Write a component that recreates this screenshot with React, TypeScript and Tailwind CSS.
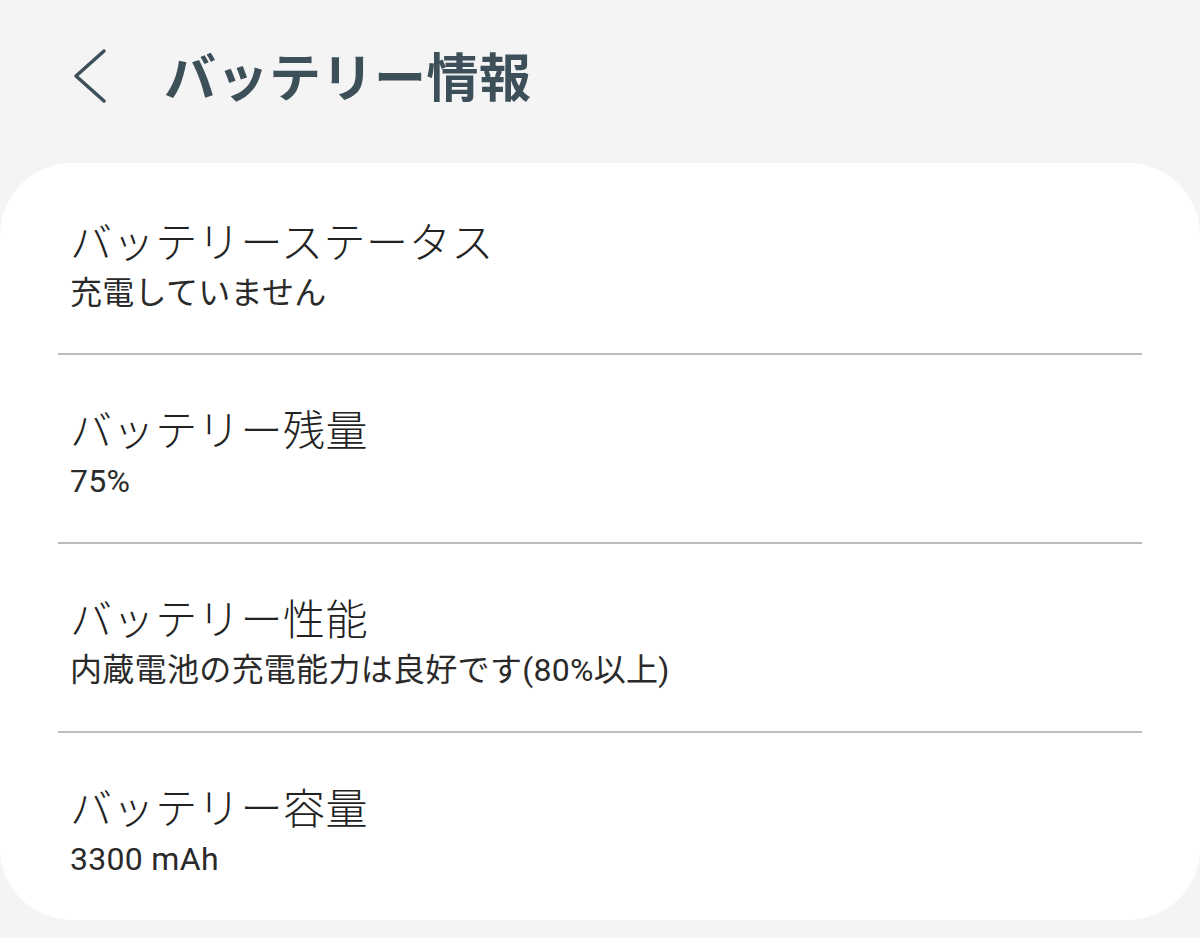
import React from "react";

const rows = [
  { title: "バッテリーステータス", value: "充電していません" },
  { title: "バッテリー残量", value: "75%" },
  { title: "バッテリー性能", value: "内蔵電池の充電能力は良好です(80%以上)" },
  { title: "バッテリー容量", value: "3300 mAh" },
];

const jpFont = {
  fontFamily: '"Noto Sans CJK JP", Roboto, sans-serif',
};

const valueFont = {
  fontFamily: 'Roboto, "Noto Sans CJK JP", sans-serif',
};

export default function App() {
  return (
    <div
      className="w-[1200px] h-[938px] bg-[#f4f4f4] flex flex-col overflow-hidden"
      style={jpFont}
    >
      {/* Header */}
      <div className="h-[163px] flex items-start pt-[44px] pl-[68px]">
        <svg width="44" height="62" viewBox="0 0 44 62" className="mt-[1px]">
          <polyline
            points="36,6 8,31 36,56"
            fill="none"
            stroke="#3d4f59"
            strokeWidth="3.5"
            strokeLinecap="round"
            strokeLinejoin="round"
          />
        </svg>
        <h1 className="ml-[52px] text-[52px] leading-[62px] font-bold text-[#3d4f59] tracking-[0.5px]">
          バッテリー情報
        </h1>
      </div>

      {/* Card */}
      <div className="bg-white rounded-[72px] flex flex-col">
        {rows.map((row, i) => (
          <div key={row.title} className="flex flex-col">
            {i > 0 && <div className="mx-[58px] h-[2px] bg-[#bdbdbd]" />}
            <div
              className={`flex flex-col px-[70px] ${
                i === 0 ? "h-[190px] pt-[52px]" : "h-[187px] pt-[48px]"
              }`}
            >
              <div className="text-[42px] leading-[50px] font-light tracking-[0.6px] text-[#222222]">
                {row.title}
              </div>
              <div
                className="mt-[9px] text-[32px] leading-[38px] font-normal tracking-[0.3px] text-[#2a2a2a]"
                style={valueFont}
              >
                {row.value}
              </div>
            </div>
          </div>
        ))}
      </div>
    </div>
  );
}
